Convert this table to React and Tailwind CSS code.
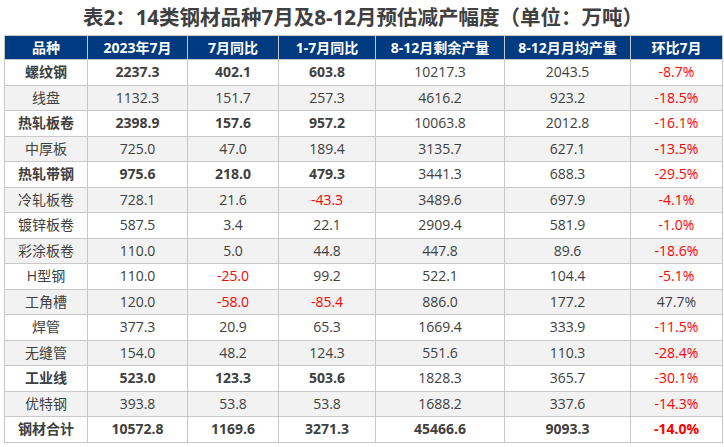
import React from 'react';

const headers = ['品种', '2023年7月', '7月同比', '1-7月同比', '8-12月剩余产量', '8-12月月均产量', '环比7月'];
const widths = ['w-[83px]', 'w-[100px]', 'w-[91px]', 'w-[97px]', 'w-[129px]', 'w-[126px]', 'w-[92px]'];

const rows = [
  { name: '螺纹钢', v: ['2237.3', '402.1', '603.8', '10217.3', '2043.5', '-8.7%'], bold: true },
  { name: '线盘', v: ['1132.3', '151.7', '257.3', '4616.2', '923.2', '-18.5%'] },
  { name: '热轧板卷', v: ['2398.9', '157.6', '957.2', '10063.8', '2012.8', '-16.1%'], bold: true },
  { name: '中厚板', v: ['725.0', '47.0', '189.4', '3135.7', '627.1', '-13.5%'] },
  { name: '热轧带钢', v: ['975.6', '218.0', '479.3', '3441.3', '688.3', '-29.5%'], bold: true },
  { name: '冷轧板卷', v: ['728.1', '21.6', '-43.3', '3489.6', '697.9', '-4.1%'] },
  { name: '镀锌板卷', v: ['587.5', '3.4', '22.1', '2909.4', '581.9', '-1.0%'] },
  { name: '彩涂板卷', v: ['110.0', '5.0', '44.8', '447.8', '89.6', '-18.6%'] },
  { name: 'H型钢', v: ['110.0', '-25.0', '99.2', '522.1', '104.4', '-5.1%'] },
  { name: '工角槽', v: ['120.0', '-58.0', '-85.4', '886.0', '177.2', '47.7%'] },
  { name: '焊管', v: ['377.3', '20.9', '65.3', '1669.4', '333.9', '-11.5%'] },
  { name: '无缝管', v: ['154.0', '48.2', '124.3', '551.6', '110.3', '-28.4%'] },
  { name: '工业线', v: ['523.0', '123.3', '503.6', '1828.3', '365.7', '-30.1%'], bold: true },
  { name: '优特钢', v: ['393.8', '53.8', '53.8', '1688.2', '337.6', '-14.3%'] },
  { name: '钢材合计', v: ['10572.8', '1169.6', '3271.3', '45466.6', '9093.3', '-14.0%'], total: true },
];

export default function App() {
  return (
    <div
      className="w-[724px] h-[447px] bg-white overflow-hidden text-[#404040]"
      style={{ fontFamily: '"Open Sans", "Noto Sans CJK SC", sans-serif' }}
    >
      {/* Title */}
      <div className="h-[35px] pt-[3px] pl-[2px] text-center text-[20.5px] leading-[28px] font-bold">
        表2：14类钢材品种7月及8-12月预估减产幅度（单位：万吨）
      </div>

      {/* Table */}
      <table className="ml-[4px] w-[718px] border-collapse table-fixed text-[14px]">
        <thead>
          <tr className="h-[24px] bg-[#003a80] text-white">
            {headers.map((h, i) => (
              <th key={i} className={`${widths[i]} border border-[#c8c8c8] font-bold leading-[20px] p-0`}>
                {h}
              </th>
            ))}
          </tr>
        </thead>
        <tbody>
          {rows.map((r, ri) => (
            <tr key={ri} className={`h-[25.5px] ${ri % 2 === 1 ? 'bg-[#f2f2f2]' : 'bg-white'}`}>
              <td className={`border border-[#c8c8c8] text-center p-0 leading-[20px] ${r.bold || r.total ? 'font-bold' : ''}`}>
                {r.name}
              </td>
              {r.v.map((v, ci) => {
                const bold = r.total || (r.bold && ci < 3);
                const red = v.startsWith('-');
                return (
                  <td
                    key={ci}
                    className={`border border-[#c8c8c8] text-center p-0 leading-[20px] ${bold ? 'font-bold' : ''} ${red ? 'text-[#ff0000]' : ''}`}
                  >
                    {v}
                  </td>
                );
              })}
            </tr>
          ))}
        </tbody>
      </table>
    </div>
  );
}
